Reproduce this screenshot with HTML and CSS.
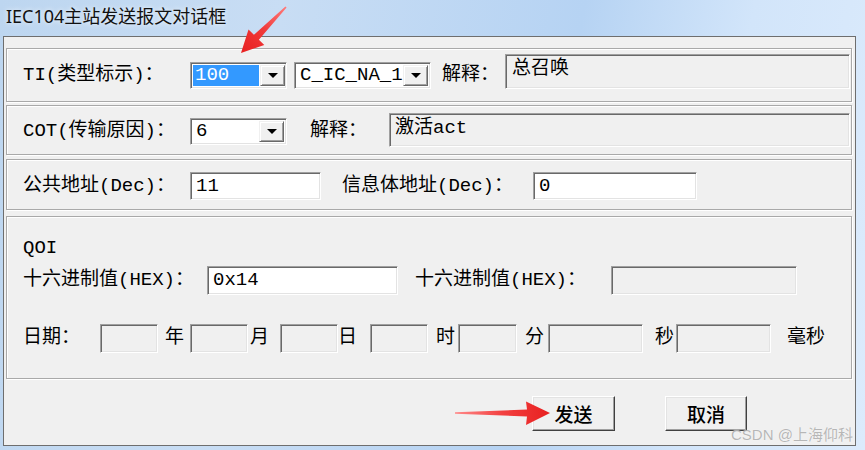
FILE: index.html
```html
<!DOCTYPE html>
<html lang="zh-CN">
<head>
<meta charset="utf-8">
<title>IEC104主站发送报文对话框</title>
<link rel="stylesheet" href="styles.css">
</head>
<body>
<div class="window">
  <div class="titlebar">IEC104主站发送报文对话框</div>
  <div class="client">
    <section class="group g1">
      <div class="row r1">
        <span class="lbl w167">TI(类型标示)：</span>
        <div class="combo c1"><span class="combo-val sel">100</span><span class="combo-btn"></span></div>
        <div class="combo c2"><span class="combo-val">C_IC_NA_1</span><span class="combo-btn"></span></div>
        <span class="lbl explain1">解释：</span>
        <div class="field ro top f1">总召唤</div>
      </div>
    </section>
    <section class="group g2">
      <div class="row r2">
        <span class="lbl w167">COT(传输原因)：</span>
        <div class="combo c3"><span class="combo-val plain">6</span><span class="combo-btn"></span></div>
        <span class="lbl explain2">解释：</span>
        <div class="field ro top f2">激活act</div>
      </div>
    </section>
    <section class="group g3">
      <div class="row r3">
        <span class="lbl w167">公共地址(Dec)：</span>
        <div class="field edit e1">11</div>
        <span class="lbl info">信息体地址(Dec)：</span>
        <div class="field edit e2">0</div>
      </div>
    </section>
    <section class="group g4">
      <div class="qoi">QOI</div>
      <div class="row r4">
        <span class="lbl hex1">十六进制值(HEX)：</span>
        <div class="field edit h1">0x14</div>
        <span class="lbl hex2">十六进制值(HEX)：</span>
        <div class="field ro h2"></div>
      </div>
      <div class="row r5">
        <span class="lbl d-date">日期：</span>
        <div class="field ro d58"></div>
        <span class="lbl u-year">年</span>
        <div class="field ro d58"></div>
        <span class="lbl u-month">月</span>
        <div class="field ro d58"></div>
        <span class="lbl u-day">日</span>
        <div class="field ro d58"></div>
        <span class="lbl u-hour">时</span>
        <div class="field ro d59"></div>
        <span class="lbl u-min">分</span>
        <div class="field ro d95"></div>
        <span class="lbl u-sec">秒</span>
        <div class="field ro d95"></div>
        <span class="lbl u-ms">毫秒</span>
      </div>
    </section>
    <div class="buttons">
      <button class="btn send">发送</button>
      <button class="btn cancel">取消</button>
    </div>
  </div>
  <svg class="arrows" width="865" height="450" viewBox="0 0 865 450">
    <defs>
      <linearGradient id="ga" x1="286" y1="7" x2="241" y2="53" gradientUnits="userSpaceOnUse">
        <stop offset="0" stop-color="#ff7a7a"/>
        <stop offset="0.5" stop-color="#f03a3a"/>
        <stop offset="1" stop-color="#e82020"/>
      </linearGradient>
      <linearGradient id="gb" x1="455" y1="413" x2="550" y2="413" gradientUnits="userSpaceOnUse">
        <stop offset="0" stop-color="#ff8a8a"/>
        <stop offset="0.5" stop-color="#f24040"/>
        <stop offset="1" stop-color="#e82020"/>
      </linearGradient>
    </defs>
    <polygon fill="url(#ga)" points="285.4,6.4 253.9,34.8 248.5,29.5 241,53 264.3,44.9 258.9,39.7 286.6,7.6"/>
    <polygon fill="url(#gb)" points="455,412.2 527,409.5 526,401.5 550,413 526,425 527,416.5 455,413.8"/>
  </svg>
  <div class="watermark">CSDN @上海仰科</div>
</div>
</body>
</html>
```

FILE: styles.css
```css
* { box-sizing: border-box; margin: 0; padding: 0; }
html, body { width: 865px; height: 450px; overflow: hidden; }
body {
  background: #c9dff5;
  font-family: "Liberation Mono", "Noto Sans CJK SC", monospace;
  font-size: 19px;
  color: #000;
}
.window {
  position: relative;
  width: 865px;
  height: 450px;
  background: linear-gradient(100deg, #bdd6f0 0%, #c8ddf4 30%, #b6d3f3 62%, #d2e5fa 80%, #dcebfc 100%);
}
.titlebar {
  height: 36px;
  padding: 4px 0 0 6px;
  font-family: "Noto Sans", "Noto Sans CJK SC", sans-serif;
  font-size: 18px;
  line-height: 24px;
  color: #111;
  text-shadow: 0 0 5px rgba(255, 255, 255, 0.9);
}
.client {
  margin-left: 3px;
  width: 853px;
  height: 410px;
  background: #f0f0f0;
  border: 1px solid #6e6e6e;
  padding: 11px 3px 0 2px;
  display: flex;
  flex-direction: column;
}
.group {
  border: 1px solid #a9a9a9;
  box-shadow: inset 1px 1px 0 #fff, 1px 1px 0 #fff;
  padding-left: 16px;
  padding-right: 1px;
}
.g1 { padding-top: 5px; padding-bottom: 5px; }
.g2 { margin-top: 3px; padding-top: 7px; padding-bottom: 5px; }
.g3 { margin-top: 4px; padding-top: 9px; padding-bottom: 6px; }
.g4 { margin-top: 6px; padding-top: 20px; padding-bottom: 25px; }

.row { display: flex; align-items: center; }
.r1 { height: 42px; }
.r2 { height: 36px; }
.r3 { height: 34px; }
.r4 { height: 30px; margin-top: 6px; }
.r5 { height: 30px; margin-top: 28px; }

.lbl { flex: none; white-space: nowrap; line-height: 24px; }
.w167 { width: 167px; }
.explain1 { width: 63px; margin-left: 11px; }
.explain2 { width: 79px; margin-left: 23px; }
.info { width: 191px; margin-left: 21px; }
.hex1 { width: 184px; }
.hex2 { width: 196px; margin-left: 17px; }
.d-date { width: 77px; }
.u-year { width: 25px; margin-left: 7px; }
.u-month { width: 30px; margin-left: 2px; }
.u-day { width: 32px; }
.u-hour { width: 22px; margin-left: 8px; }
.u-min { width: 23px; margin-left: 8px; }
.u-sec { width: 21px; margin-left: 12px; }
.u-ms { margin-left: 16px; }

.qoi { height: 22px; line-height: 22px; }

/* sunken 3D border shared by combos and edits */
.combo, .field {
  flex: none;
  border: 1px solid;
  border-color: #a0a0a0 #fff #fff #a0a0a0;
  box-shadow: inset 1px 1px 0 #696969, inset -1px -1px 0 #e3e3e3;
}
.combo {
  display: flex;
  align-items: stretch;
  height: 27px;
  background: #fff;
  padding: 2px;
}
.c1 { width: 97px; }
.c2 { width: 137px; margin-left: 7px; }
.c3 { width: 97px; }
.combo-val {
  flex: 1;
  line-height: 21px;
  padding-left: 3px;
  white-space: nowrap;
  overflow: hidden;
}
.combo-val.sel {
  flex: none;
  width: 66px;
  margin-right: 1px;
  background: #3399ff;
  color: #fff;
  padding-left: 2px;
}
.combo-btn {
  flex: none;
  width: 25px;
  background: #f0f0f0;
  border: 1px solid;
  border-color: #f0f0f0 #696969 #696969 #f0f0f0;
  box-shadow: inset 1px 1px 0 #fff, inset -1px -1px 0 #a0a0a0;
  display: flex;
  align-items: center;
  justify-content: center;
}
.combo-btn::after {
  content: "";
  margin-top: 1px;
  border-left: 5px solid transparent;
  border-right: 5px solid transparent;
  border-top: 5px solid #000;
}

.field {
  height: 29px;
  line-height: 24px;
  padding: 1px 3px 0 5px;
  white-space: nowrap;
}
.field.edit { background: #fff; }
.field.ro { background: #f0f0f0; }
.field.top { align-self: flex-start; padding-top: 2px; }
.f1 { flex: 1; height: 35px; padding-left: 6px; }
.f2 { flex: 1; height: 34px; padding-left: 5px; }
.e1 { width: 131px; height: 28px; }
.e2 { width: 164px; height: 28px; }
.h1 { width: 191px; }
.h2 { width: 186px; }
.d58 { width: 58px; }
.d59 { width: 59px; }
.d95 { width: 95px; }

.buttons {
  display: flex;
  justify-content: flex-end;
  gap: 50px;
  padding-top: 17px;
  padding-right: 105px;
}
.btn {
  width: 83px;
  height: 35px;
  font-family: "Noto Sans CJK SC", sans-serif;
  font-size: 19px;
  font-weight: 500;
  color: #000;
  background: #f0f0f0;
  border: 1px solid;
  border-color: #fff #404040 #404040 #fff;
  box-shadow: inset -1px -1px 0 #a0a0a0, inset 1px 1px 0 #e3e3e3;
  line-height: 30px;
}
.cancel { width: 82px; }

.arrows { position: absolute; left: 0; top: 0; pointer-events: none; }
.watermark {
  position: absolute;
  left: 731px;
  top: 426px;
  font-family: "Liberation Sans", "Noto Sans CJK SC", sans-serif;
  font-size: 15px;
  line-height: 18px;
  color: rgba(160, 160, 160, 0.75);
  text-shadow: 0 0 1px rgba(255, 255, 255, 0.9);
  white-space: nowrap;
}
```
